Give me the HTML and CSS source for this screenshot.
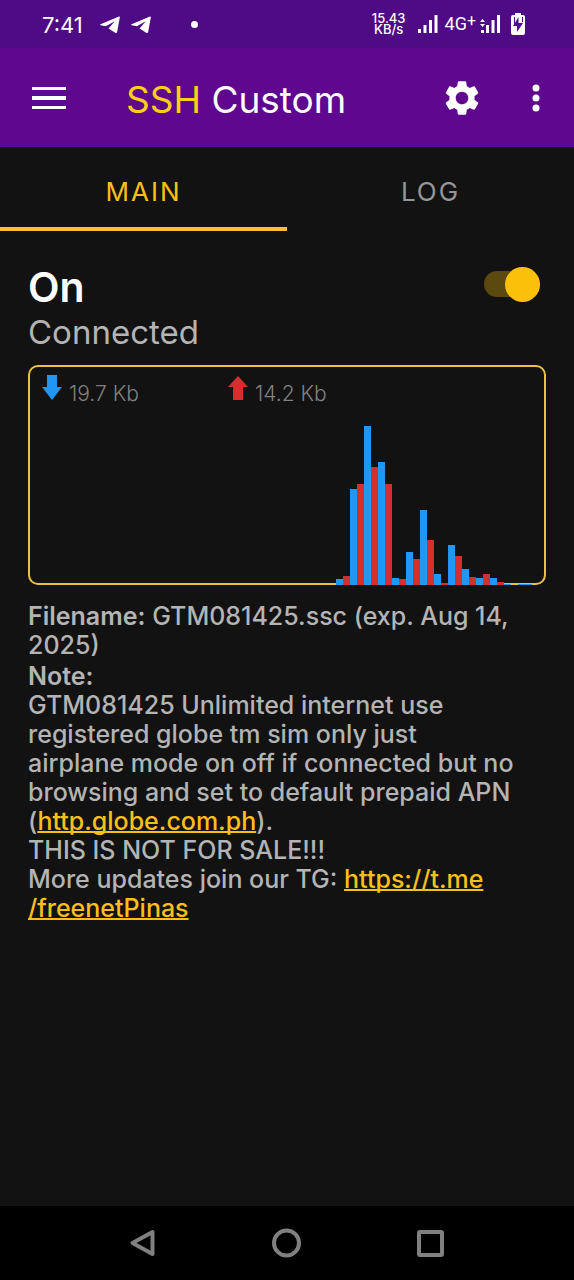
FILE: index.html
```html
<!DOCTYPE html>
<html lang="en">
<head>
<meta charset="utf-8">
<meta name="viewport" content="width=device-width, initial-scale=1">
<title>SSH Custom</title>
<link rel="stylesheet" href="styles.css">
</head>
<body>
<div class="statusbar">
  <span class="clock">7:41</span>
  <svg class="plane" width="20" height="18" viewBox="0 0 20 18"><path d="M0.5 8.2 L19 0.5 Q20 0.3 19.8 1.5 L17.2 15.8 Q16.8 17.6 15.2 16.8 L8.5 12.6 L14.8 5.2 L5.8 10.3 L0.6 9.2 Q-0.2 8.7 0.5 8.2Z"/></svg>
  <svg class="plane" width="20" height="18" viewBox="0 0 20 18"><path d="M0.5 8.2 L19 0.5 Q20 0.3 19.8 1.5 L17.2 15.8 Q16.8 17.6 15.2 16.8 L8.5 12.6 L14.8 5.2 L5.8 10.3 L0.6 9.2 Q-0.2 8.7 0.5 8.2Z"/></svg>
  <span class="dot"></span>
  <span class="speed"><span>15.43</span><span>KB/s</span></span>
  <svg class="signal" width="20" height="18" viewBox="0 0 20 18"><path d="M0 14h3v4H0zM5.500 10h3v8h-3zM11 5h3v13h-3zM16.500 0h3v18h-3z"/></svg>
  <span class="network">4G<span class="plus">+</span></span>
  <svg class="signal signal-data" width="20" height="18" viewBox="0 0 20 18"><path d="M1 15h3v3H1zM6 10h3v8H6zM11.500 5h3v13h-3zM17 0h3v18h-3zM0 7L2.500 4L5 7zM0 9h5L2.500 12z"/></svg>
  <svg class="battery" width="14" height="24" viewBox="0 0 14 24"><path d="M4 1h6v2h2q2 0 2 2v16q0 2-2 2H2q-2 0-2-2V5q0-2 2-2h2z"/><path class="bolt" d="M7.500 5L2 14h4v6l6-9H7.500zM3 5h1v6L3 12zM11 5h1v5h-1z"/></svg>
</div>
<header class="appbar">
  <button class="icon-button" aria-label="Menu"><svg width="34" height="24" viewBox="0 0 34 24"><path d="M0 1h34v3H0zM0 10h34v4H0zM0 20h34v3H0z"/></svg></button>
  <h1 class="title"><span class="accent">SSH</span> Custom</h1>
  <button class="icon-button" aria-label="Settings"><svg width="42" height="42" viewBox="0 0 24 24"><path d="M19.140 12.940c.04-.3.06-.61.06-.94s-.02-.64-.07-.94l2.030-1.580c.18-.14.23-.41.12-.61l-1.920-3.320c-.12-.22-.37-.29-.59-.22l-2.390.96c-.5-.38-1.030-.7-1.620-.94L14.400 2.810C14.360 2.570 14.160 2.400 13.920 2.400h-3.840c-.24 0-.43.17-.47.41L9.250 5.350C8.660 5.590 8.120 5.920 7.630 6.290L5.240 5.330c-.22-.08-.47 0-.59.22L2.740 8.870c-.12.21-.08.47.12.61l2.030 1.580C4.840 11.360 4.800 11.690 4.800 12s.02.64.07.94l-2.030 1.580c-.18.14-.23.41-.12.61l1.920 3.320c.12.22.37.29.59.22l2.390-.96c.5.38 1.030.7 1.620.94l.36 2.540c.05.24.24.41.48.41h3.840c.24 0 .44-.17.47-.41l.36-2.540c.59-.24 1.130-.56 1.620-.94l2.390.96c.22.08.47 0 .59-.22l1.920-3.320c.12-.22.07-.47-.12-.61L19.140 12.940zM12 15.600c-1.980 0-3.600-1.620-3.600-3.600s1.620-3.600 3.600-3.600 3.600 1.620 3.600 3.600S13.980 15.600 12 15.600z"/></svg></button>
  <button class="icon-button more" aria-label="More options"><svg width="8" height="28" viewBox="0 0 8 28"><circle cx="4" cy="4" r="3.500"/><circle cx="4" cy="14" r="3.500"/><circle cx="4" cy="24" r="3.500"/></svg></button>
</header>
<nav class="tabs" role="tablist">
  <button class="tab active" role="tab" aria-selected="true">MAIN</button>
  <button class="tab" role="tab" aria-selected="false">LOG</button>
</nav>
<main class="content">
  <div class="power">
    <label class="power-label" for="power">On</label>
    <input class="switch" id="power" type="checkbox" role="switch" checked>
  </div>
  <p class="state">Connected</p>
  <section class="traffic" aria-label="Traffic">
    <div class="rates">
      <span class="rate"><svg class="down" width="20" height="26" viewBox="0 0 20 26"><path d="M5 0h10v12h5L10 25L0 12h5z"/></svg><span>19.7 Kb</span></span>
      <span class="rate"><svg class="up" width="20" height="26" viewBox="0 0 20 26"><path d="M10 1L20 12h-5v13H5V12H0z"/></svg><span>14.2 Kb</span></span>
    </div>
    <svg class="bars" viewBox="0 0 74 220" preserveAspectRatio="none" shape-rendering="crispEdges">
      <path class="down" d="M44 220v-6h1v6zM46 220v-96h1v96zM48 220V61h1v159zM50 220V97h1v123zM52 220v-7h1v7zM54 220v-33h1v33zM56 220v-75h1v75zM58 220v-11h1v11zM60 220v-40h1v40zM62 220v-16h1v16zM64 220v-7h1v7zM66 220v-7h1v7zM68 220v-1h1v1zM70 220v-1h2v1z"/>
      <path class="up" d="M45 220v-9h1v9zM47 220V119h1v101zM49 220V102h1v118zM51 220V119h1v101zM53 220v-6h1v6zM55 220v-26h1v26zM57 220v-45h1v45zM59 220v-2h1v2zM61 220v-29h1v29zM63 220v-8h1v8zM65 220v-11h1v11zM67 220v-3h1v3z"/>
    </svg>
  </section>
  <p class="info"><b>Filename:</b> GTM081425.ssc (exp. Aug 14, 2025)</p>
  <div class="info note">
    <b>Note:</b><br>
    GTM081425 Unlimited internet use<br>registered globe tm sim only just<br>airplane mode on off if connected but no<br>browsing and set to default prepaid APN<br>(<a href="#globe">http.globe.com.ph</a>).<br>
    THIS IS NOT FOR SALE!!!<br>
    More updates join our TG: <a href="#telegram">https://t.me<br>/freenetPinas</a>
  </div>
</main>
<footer class="navbar">
  <button class="nav-button" aria-label="Back"><svg width="30" height="30" viewBox="0 0 30 30"><path d="M24.500 4v22L4.500 15z"/></svg></button>
  <button class="nav-button" aria-label="Home"><svg width="30" height="30" viewBox="0 0 30 30"><circle cx="14.500" cy="15" r="12.500"/></svg></button>
  <button class="nav-button" aria-label="Recent apps"><svg width="30" height="30" viewBox="0 0 30 30"><rect x="3" y="4" width="23" height="23" rx="1"/></svg></button>
</footer>
</body>
</html>
```

FILE: styles.css
```css
* { box-sizing: border-box; }

body {
  margin: 0;
  min-height: 100vh;
  display: flex;
  flex-direction: column;
  background: #121212;
  color: #b4b4b4;
  font-family: Inter, Roboto, sans-serif;
}

button {
  border: 0;
  padding: 0;
  background: none;
  font: inherit;
}

h1, p { margin: 0; font-weight: 400; }

.statusbar {
  display: flex;
  align-items: center;
  height: 48px;
  padding: 0 49px 0 42px;
  background: #4f0a86;
  color: #fff;
  fill: #fff;
}
.clock { font-size: 22px; line-height: 28px; margin-right: 17px; padding-top: 2px; }
.plane { margin: 2px 11px 0 0; }
.dot { width: 7px; height: 7px; border-radius: 50%; background: #fff; margin: 0 auto 0 29px; }
.speed {
  display: flex;
  flex-direction: column;
  align-items: center;
  margin-right: 12px;
  font-size: 13px;
  line-height: 11px;
  font-weight: 500;
}
.signal { margin-right: 7px; }
.network { font-family: Roboto, sans-serif; font-size: 18px; line-height: 18px; }
.plus { font-size: 16px; line-height: 8px; vertical-align: 4px; }
.signal-data { margin: 0 11px 0 4px; }
.bolt { fill: #4f0a86; }

.appbar {
  display: flex;
  align-items: center;
  height: 99px;
  padding: 0 34px 0 32px;
  background: #5f078f;
  color: #fff;
  fill: #fff;
}
.icon-button { display: flex; fill: #fff; }
.title { flex: 1; margin-left: 60px; font-size: 37px; line-height: 44px; padding-top: 4px; }
.accent { color: #fdd017; }
.more { margin-left: 49px; }

.tabs { display: flex; height: 84px; }
.tab {
  flex: 1;
  padding-top: 8px;
  border-bottom: 4px solid transparent;
  color: #969696;
  font-size: 26px;
  letter-spacing: 2px;
}
.active { color: #fbc017; border-color: #fbc02d; }

.content { flex: 1; padding: 32px 28px; }

.power { display: flex; align-items: center; justify-content: space-between; }
.power-label { color: #fff; font-size: 41px; line-height: 48px; font-weight: 600; }
.switch {
  appearance: none;
  display: flex;
  align-items: center;
  justify-content: flex-end;
  width: 56px;
  height: 26px;
  margin: 0 6px 6px 0;
  border-radius: 13px;
  background: #5b4910;
}
.switch::before {
  content: "";
  flex: none;
  width: 35px;
  height: 35px;
  border-radius: 50%;
  background: #fbc00a;
}
.state { font-size: 33px; line-height: 42px; }

.traffic {
  position: relative;
  height: 220px;
  margin: 12px 0 17px;
  border: 2px solid #ecc044;
  border-radius: 10px;
}
.rates { display: flex; padding: 8px 12px; }
.rate {
  display: flex;
  flex: 0 0 186px;
  gap: 7px;
  color: #808080;
  font-size: 21px;
  line-height: 38px;
  font-weight: 300;
}
.down { fill: #2196f3; }
.up { fill: #d32f2f; }
.bars { position: absolute; top: -2px; left: -2px; width: calc(100% + 4px); height: calc(100% + 4px); }

.info { font-size: 25px; line-height: 29px; font-weight: 500; }
.info b { font-weight: 600; }
.note { margin-top: 2px; }
.info a { color: #fbc017; text-decoration-thickness: 2px; text-underline-offset: 1px; text-decoration-skip-ink: none; }

.navbar { display: flex; justify-content: center; gap: 114px; height: 74px; background: #000; }
.nav-button { display: flex; align-items: center; }
.nav-button svg { fill: none; stroke: #808080; stroke-width: 4px; stroke-linejoin: round; }
```
